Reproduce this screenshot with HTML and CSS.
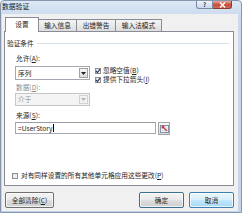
FILE: index.html
```html
<!DOCTYPE html>
<html lang="zh-CN">
<head>
<meta charset="utf-8">
<title>数据验证</title>
<link rel="stylesheet" href="styles.css">
</head>
<body>
<div class="window">
  <div class="titlebar">
    <span class="title">数据验证</span>
    <div class="caps">
      <span class="cap help">?</span>
      <span class="cap close"><svg width="7" height="6" viewBox="0 0 7 6"><path d="M1 0.5 L6 5.5 M6 0.5 L1 5.5" stroke="#fff" stroke-width="1.4"/></svg></span>
    </div>
  </div>
  <div class="client">
    <div class="tabs">
      <div class="tab active">设置</div>
      <div class="tab t2">输入信息</div>
      <div class="tab t3">出错警告</div>
      <div class="tab t4">输入法模式</div>
    </div>
    <div class="panel">
      <div class="group-head"><span>验证条件</span><i class="rule"></i></div>
      <div class="fields">
        <div class="top-row">
          <div class="left-col">
            <div class="label">允许(<u>A</u>):</div>
            <div class="select"><span class="val">序列</span><span class="arrow"><svg width="5" height="3" viewBox="0 0 5 3"><path d="M0 0 H5 L2.5 3 Z" fill="#222"/></svg></span></div>
            <div class="label dis lbl2">数据(<u>D</u>):</div>
            <div class="select disabled"><span class="val">介于</span><span class="arrow"><svg width="5" height="3" viewBox="0 0 5 3"><path d="M0 0 H5 L2.5 3 Z" fill="#b5b5b5"/></svg></span></div>
          </div>
          <div class="right-col">
            <div class="check"><span class="box on"><svg width="6" height="6" viewBox="0 0 6 6"><path d="M1 3 L2.5 4.6 L5 1.2" stroke="#2b3a5a" stroke-width="1.1" fill="none"/></svg></span><span>忽略空值(<u>B</u>)</span></div>
            <div class="check"><span class="box on"><svg width="6" height="6" viewBox="0 0 6 6"><path d="M1 3 L2.5 4.6 L5 1.2" stroke="#2b3a5a" stroke-width="1.1" fill="none"/></svg></span><span>提供下拉箭头(<u>I</u>)</span></div>
          </div>
        </div>
        <div class="label lbl3">来源(<u>S</u>):</div>
        <div class="source-row">
          <div class="input"><span>=UserStory</span><i class="caret"></i></div>
          <div class="refbtn"><svg width="9" height="9" viewBox="0 0 9 9"><rect x="0.5" y="1.5" width="8" height="7" fill="#fff" stroke="#7f8ea6"/><path d="M0.5 4 H8.5 M0.5 6.3 H8.5 M3.2 1.5 V8.5 M5.9 1.5 V8.5" stroke="#b9c4d4" stroke-width="0.6"/><path d="M7 7 L2.5 2.5 M2.2 2.2 L2.2 4.6 M2.2 2.2 L4.6 2.2" stroke="#c4323a" stroke-width="1.1"/></svg></div>
        </div>
      </div>
      <div class="check bottom"><span class="box"></span><span>对有同样设置的所有其他单元格应用这些更改(<u>P</u>)</span></div>
    </div>
    <div class="buttons">
      <div class="btn clear">全部清除(<u>C</u>)</div>
      <div class="btn ok">确定</div>
      <div class="btn cancel">取消</div>
    </div>
  </div>
</div>
</body>
</html>
```
FILE: styles.css
```css
* { box-sizing: border-box; margin: 0; padding: 0; }
html, body { background: #ffffff; }
body {
  width: 244px;
  height: 218px;
  overflow: hidden;
  font-family: "Noto Sans CJK SC", "Noto Sans", sans-serif;
  font-size: 6.7px;
  line-height: 9px;
  color: #1e1e1e;
}
u { text-decoration: underline; text-decoration-thickness: 0.5px; text-underline-offset: 1px; }

.window {
  width: 242px;
  height: 213px;
  border: 1px solid #8495ad;
  border-radius: 4px 4px 0 0;
  background: linear-gradient(180deg, #dde8f5 0, #cbdbee 14px, #c4d5ea 100%);
  display: flex;
  flex-direction: column;
}
.titlebar {
  height: 13px;
  display: flex;
  justify-content: space-between;
  align-items: flex-start;
  padding-left: 1px;
}
.title { padding-top: 1px; font-size: 6.8px; color: #1b1b1b; }
.caps { display: flex; margin-right: 9px; }
.cap {
  height: 8px;
  display: flex;
  align-items: center;
  justify-content: center;
  border: 1px solid #7c8aa0;
  border-top: 0;
}
.help {
  width: 17px;
  border-radius: 0 0 0 3px;
  background: linear-gradient(180deg, #eef4fb, #c9d8ec);
  font-size: 6px;
  line-height: 7px;
  color: #2a3a55;
  font-weight: bold;
}
.close {
  width: 19px;
  border-left: 0;
  border-color: #8c3a2c;
  border-radius: 0 0 3px 0;
  background: linear-gradient(180deg, #e9a99a, #c74b36 55%, #d66e58);
}

.client {
  flex: 1;
  margin: 0 3px 1px 1px;
  background: #f0f0f0;
  padding: 3px 4px 3px 2px;
  display: flex;
  flex-direction: column;
}
.tabs {
  height: 15px;
  margin-bottom: -1px;
  padding-left: 1px;
  display: flex;
  align-items: flex-start;
  position: relative;
  z-index: 2;
}
.tab {
  height: 12px;
  margin-top: 2px;
  border: 1px solid #898c95;
  border-bottom: 0;
  background: linear-gradient(180deg, #f4f4f4, #e9e9e9 50%, #dcdcdc);
  display: flex;
  align-items: center;
  justify-content: center;
  color: #1e1e1e;
}
.tab.active {
  height: 15px;
  margin-top: 0;
  width: 34px;
  background: #ffffff;
  position: relative;
  z-index: 3;
  padding-bottom: 2px;
}
.t2 { width: 39px; margin-left: -1px; }
.t3 { width: 40px; margin-left: -1px; }
.t4 { width: 47px; margin-left: -1px; }

.panel {
  flex: 1;
  background: #ffffff;
  border: 1px solid #898c95;
  padding: 7px 0 5px 2px;
  display: flex;
  flex-direction: column;
}
.group-head { display: flex; align-items: center; height: 9px; }
.rule { flex: 1; height: 1px; background: #d5dfe5; margin: 0 4px 0 3px; }

.fields { margin-left: 8px; }
.top-row { display: flex; margin-top: 6px; }
.left-col { width: 75px; }
.right-col { margin-left: 5px; padding-top: 12px; }
.label { padding-left: 1px; height: 9px; }
.label.dis { color: #8d8d8d; }
.lbl2 { margin-top: 3px; }
.lbl3 { margin-top: 5px; }

.select {
  display: flex;
  justify-content: space-between;
  align-items: stretch;
  height: 14px;
  margin-top: 3px;
  border: 1px solid #a5a8b0;
  background: #ffffff;
}
.select .val { padding-left: 2px; line-height: 12px; }
.select .arrow {
  width: 9px;
  margin: 1px;
  border: 1px solid #a3a3a3;
  background: linear-gradient(180deg, #f6f6f6, #dedede);
  display: flex;
  align-items: center;
  justify-content: center;
}
.select.disabled {
  height: 13px;
  margin-top: 1px;
  border-color: #c6c6c6;
  background: #f4f4f4;
  color: #8d8d8d;
}
.select.disabled .val { line-height: 11px; }
.select.disabled .arrow { border-color: #d2d2d2; background: #f2f2f2; }

.check { display: flex; align-items: center; height: 9px; }
.box {
  width: 6px;
  height: 6px;
  border: 1px solid #8f8f8f;
  background: linear-gradient(135deg, #dfe3ea, #f7f8fa);
  margin-right: 2px;
  display: flex;
  align-items: center;
  justify-content: center;
  flex: none;
}
.box svg { margin: -1px; }

.source-row { display: flex; margin-top: 2px; }
.input {
  width: 141px;
  height: 12px;
  border: 1px solid #a5a8b0;
  border-top-color: #9a9ca3;
  display: flex;
  align-items: center;
  padding-left: 2px;
  line-height: 10px;
}
.caret { width: 1px; height: 8px; background: #000; margin-left: 0.5px; }
.refbtn {
  width: 12px;
  height: 13px;
  margin-left: 2px;
  border: 1px solid #a3a3a3;
  background: linear-gradient(180deg, #f7f7f7, #dcdcdc);
  display: flex;
  align-items: center;
  justify-content: center;
}

.check.bottom { margin-top: auto; margin-left: 5px; }
.check.bottom .box { margin-right: 3px; }

.buttons { display: flex; margin-top: 6px; height: 16px; }
.btn {
  height: 16px;
  border: 1px solid #707070;
  border-radius: 2px;
  background: linear-gradient(180deg, #f3f3f3, #ebebeb 45%, #dddddd 55%, #cfcfcf);
  display: flex;
  align-items: center;
  justify-content: center;
  box-shadow: inset 0 0 0 1px rgba(255,255,255,0.7);
}
.clear { width: 49px; margin-left: 1px; }
.ok { width: 45px; margin-left: auto; border-color: #3c6f8f; }
.cancel {
  width: 45px;
  margin-left: 5px;
  border-color: #3c7fb1;
  background: linear-gradient(180deg, #eaf6fd, #d9f0fc 45%, #bee6fd 55%, #a7d9f5);
}
```
